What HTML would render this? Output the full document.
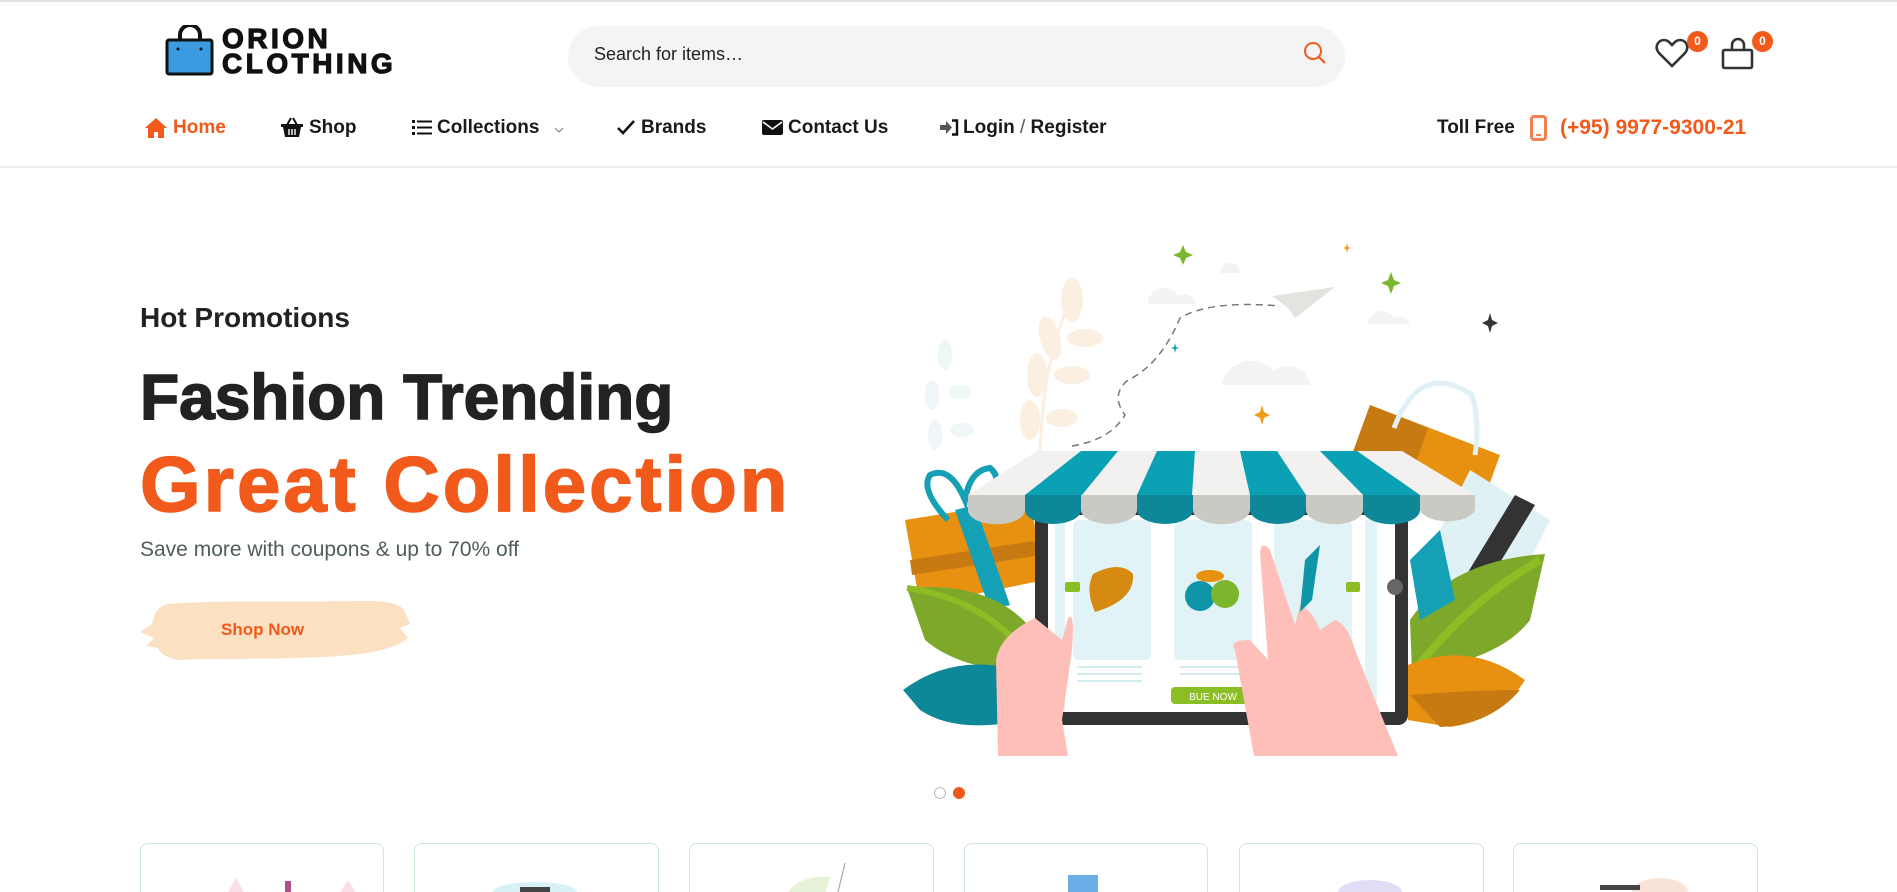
<!DOCTYPE html>
<html style="width:1897px;height:892px;overflow:hidden"><head><meta charset="utf-8"><style>
*{margin:0;padding:0;box-sizing:border-box}
body{width:1897px;height:892px;overflow:hidden;background:#fff;font-family:"Liberation Sans",Arial,sans-serif;position:relative;color:#222}
.a{position:absolute;white-space:nowrap}
.nav{font-size:19px;font-weight:bold;color:#1a1a1a;top:116px;line-height:24px}
.card{position:absolute;top:843px;height:49px;border:1px solid #cfe8d2;border-bottom:none;border-radius:8px 8px 0 0;background:#fff}
</style></head><body>
<div class="a" style="left:0;top:0;width:1897px;height:2px;background:#e3e3e3"></div>
<div class="a" style="left:0;top:166px;width:1897px;height:2px;background:#ececec"></div>

<svg class="a" style="left:164px;top:25px" width="52" height="52" viewBox="0 0 52 52">
<path d="M16 18 V10 a10 10 0 0 1 20 0 V18" fill="none" stroke="#111" stroke-width="4"/>
<rect x="3" y="15" width="45" height="34" rx="2" fill="#3a9be0" stroke="#111" stroke-width="3"/>
<circle cx="14" cy="24" r="1.5" fill="#111"/><circle cx="37" cy="24" r="1.5" fill="#111"/>
</svg>
<div class="a" style="left:222px;top:26px;font-size:28px;font-weight:900;letter-spacing:3.5px;line-height:25px;color:#111;-webkit-text-stroke:1.2px #111">ORION<br>CLOTHING</div>

<div class="a" style="left:568px;top:26px;width:777px;height:61px;border-radius:31px;background:#f4f4f4"></div>
<div class="a" style="left:594px;top:44px;font-size:18px;color:#222">Search for items…</div>
<svg class="a" style="left:1302px;top:40px" width="26" height="26" viewBox="0 0 26 26"><circle cx="11" cy="11" r="8" fill="none" stroke="#f15a1a" stroke-width="2"/><path d="M17 17 L23 23" stroke="#f15a1a" stroke-width="2.2"/></svg>

<svg class="a" style="left:1655px;top:37px" width="34" height="32" viewBox="0 0 34 32"><path d="M17 29 L4 16 C-1 10 3 3 9 3 C13 3 15 6 17 8 C19 6 21 3 25 3 C31 3 35 10 30 16 Z" fill="none" stroke="#333" stroke-width="2.6"/></svg>
<div class="a" style="left:1687px;top:31px;width:21px;height:21px;border-radius:50%;background:#f15a1a;color:#fff;font-size:12px;font-weight:bold;text-align:center;line-height:20px">0</div>
<svg class="a" style="left:1720px;top:36px" width="36" height="34" viewBox="0 0 36 34"><path d="M12 13 V9 a6 6 0 0 1 12 0 V13" fill="none" stroke="#333" stroke-width="2.6"/><rect x="3" y="14" width="29" height="18" rx="1.5" fill="none" stroke="#333" stroke-width="2.6"/></svg>
<div class="a" style="left:1752px;top:31px;width:21px;height:21px;border-radius:50%;background:#f15a1a;color:#fff;font-size:12px;font-weight:bold;text-align:center;line-height:20px">0</div>

<svg class="a" style="left:144px;top:117px" width="24" height="22" viewBox="0 0 24 22"><path d="M12 1 L1 11 H4 V21 H10 V15 H14 V21 H20 V11 H23 Z" fill="#f15a1a"/></svg>
<div class="a nav" style="left:173px;color:#f15a1a">Home</div>
<svg class="a" style="left:280px;top:116px" width="24" height="22" viewBox="0 0 24 22"><path d="M7 9 L11 2 M17 9 L13 2" stroke="#111" stroke-width="2"/><path d="M1 8 H23 V11 H21 L19 21 H5 L3 11 H1 Z" fill="#111"/><path d="M9 13 V19 M12 13 V19 M15 13 V19" stroke="#fff" stroke-width="1.4"/></svg>
<div class="a nav" style="left:309px">Shop</div>
<svg class="a" style="left:412px;top:119px" width="20" height="17" viewBox="0 0 20 17"><g fill="#111"><rect x="0" y="1" width="3" height="3"/><rect x="0" y="7" width="3" height="3"/><rect x="0" y="13" width="3" height="3"/><rect x="5" y="1.5" width="15" height="2"/><rect x="5" y="7.5" width="15" height="2"/><rect x="5" y="13.5" width="15" height="2"/></g></svg>
<div class="a nav" style="left:437px">Collections</div>
<svg class="a" style="left:553px;top:126px" width="12" height="8" viewBox="0 0 12 8"><path d="M2 2 L6 6 L10 2" fill="none" stroke="#888" stroke-width="1.2"/></svg>
<svg class="a" style="left:616px;top:119px" width="20" height="17" viewBox="0 0 20 17"><path d="M2 9 L7 14 L18 2" fill="none" stroke="#111" stroke-width="2.6"/></svg>
<div class="a nav" style="left:641px">Brands</div>
<svg class="a" style="left:762px;top:119px" width="21" height="17" viewBox="0 0 21 17"><rect x="0" y="1" width="21" height="15" rx="2" fill="#111"/><path d="M1 3 L10.5 10 L20 3" fill="none" stroke="#fff" stroke-width="1.6"/></svg>
<div class="a nav" style="left:788px">Contact Us</div>
<svg class="a" style="left:939px;top:119px" width="20" height="17" viewBox="0 0 20 17"><path d="M1 6 H7 V2 L13 8.5 L7 15 V11 H1 Z" fill="#555"/><path d="M13 1.5 H18 V15.5 H13" fill="none" stroke="#111" stroke-width="2.4"/></svg>
<div class="a nav" style="left:963px">Login <span style="font-weight:normal;color:#555">/</span> Register</div>

<div class="a nav" style="left:1437px">Toll Free</div>
<svg class="a" style="left:1530px;top:115px" width="17" height="26" viewBox="0 0 17 26"><rect x="1.5" y="1.5" width="14" height="23" rx="2.5" fill="none" stroke="#f47f50" stroke-width="3"/><rect x="6" y="19" width="5" height="2" fill="#f47f50"/></svg>
<div class="a nav" style="left:1560px;font-size:21px;color:#f15a1a">(+95) 9977-9300-21</div>

<div class="a" style="left:140px;top:298px;font-size:28px;font-weight:bold;color:#222;line-height:40px">Hot Promotions</div>
<div class="a" style="left:140px;top:362px;font-size:64px;font-weight:bold;color:#222;line-height:70px;-webkit-text-stroke:1.5px #222">Fashion Trending</div>
<div class="a" style="left:140px;top:441px;font-size:78px;font-weight:bold;color:#f15a1a;line-height:86px;letter-spacing:3px;-webkit-text-stroke:1.5px #f15a1a">Great Collection</div>
<div class="a" style="left:140px;top:537px;font-size:21px;color:#4f5d5a;line-height:26px">Save more with coupons &amp; up to 70% off</div>
<svg class="a" style="left:138px;top:598px" width="276" height="64" viewBox="0 0 276 64"><path d="M30 6 C80 2 150 4 230 3 C250 3 262 6 266 12 L272 26 L262 30 L270 40 C255 52 230 56 200 58 C150 62 80 60 40 62 C30 60 22 56 20 50 L8 48 L16 40 L2 34 L14 26 C16 16 20 8 30 6 Z" fill="#fbe1c2"/></svg>
<div class="a" style="left:221px;top:620px;font-size:17px;font-weight:bold;color:#f15a1a;line-height:20px">Shop Now</div>

<svg class="a" style="left:0;top:0" width="1897" height="892" viewBox="0 0 1897 892">
<g fill="#f4f2f2"><path d="M1148 304 a16 16 0 0 1 30 -8 a12 12 0 0 1 18 8 Z"/><path d="M1368 324 a14 14 0 0 1 26 -6 a11 11 0 0 1 16 6 Z"/><path d="M1222 385 a30 30 0 0 1 52 -14 a22 22 0 0 1 36 14 Z"/><path d="M1220 273 a10 10 0 0 1 20 0 Z"/></g>
<g fill="#fbefe2"><ellipse cx="1072" cy="300" rx="11" ry="22"/><ellipse cx="1050" cy="338" rx="10" ry="22" transform="rotate(-15 1050 338)"/><ellipse cx="1085" cy="338" rx="18" ry="9"/><ellipse cx="1037" cy="375" rx="10" ry="22"/><ellipse cx="1072" cy="375" rx="18" ry="9"/><ellipse cx="1030" cy="420" rx="10" ry="20"/><ellipse cx="1062" cy="418" rx="16" ry="9"/><path d="M1075 290 Q1040 360 1040 470" stroke="#fbefe2" stroke-width="3" fill="none"/></g>
<g fill="#eef6f8"><ellipse cx="945" cy="355" rx="7" ry="15"/><ellipse cx="932" cy="395" rx="7" ry="15"/><ellipse cx="960" cy="392" rx="12" ry="7"/><ellipse cx="935" cy="435" rx="7" ry="15"/><ellipse cx="962" cy="430" rx="12" ry="7"/></g>
<path d="M1072 446 Q1110 440 1125 415 Q1110 395 1128 380 Q1160 365 1180 318 Q1210 300 1280 306" fill="none" stroke="#777" stroke-width="1.5" stroke-dasharray="7 5"/>
<path d="M1272 296 L1335 287 L1295 318 L1288 308 Z" fill="#e3e3e0"/>
<g><path d="M1183 245 l3 7 l7 3 l-7 3 l-3 7 l-3 -7 l-7 -3 l7 -3 Z" fill="#7bb62d"/><path d="M1391 272 l3 8 l7 3 l-7 3 l-3 8 l-3 -8 l-7 -3 l7 -3 Z" fill="#7bb62d"/><path d="M1490 313 l2 7 l6 3 l-6 3 l-2 7 l-2 -7 l-6 -3 l6 -3 Z" fill="#333"/><path d="M1262 405 l2 7 l6 3 l-6 3 l-2 7 l-2 -7 l-6 -3 l6 -3 Z" fill="#f09a1a"/><path d="M1347 243 l1 4 l3 1 l-3 1 l-1 4 l-1 -4 l-3 -1 l3 -1 Z" fill="#f09a1a"/><path d="M1175 343 l1 4 l3 1 l-3 1 l-1 4 l-1 -4 l-3 -1 l3 -1 Z" fill="#16a0b5"/></g>
<path d="M1370 405 L1500 455 L1480 510 L1350 460 Z" fill="#e8900f"/><path d="M1370 405 L1428 428 L1410 480 L1350 460 Z" fill="#c77a12"/>
<path d="M1394 428 Q1420 360 1472 395 Q1480 420 1475 455" fill="none" stroke="#e0f1f5" stroke-width="5"/>
<path d="M1470 470 L1550 520 L1500 620 L1420 570 Z" fill="#e0f1f5"/><path d="M1515 495 L1535 505 L1465 620 L1445 610 Z" fill="#333"/>
<path d="M905 520 L1030 500 L1045 580 L920 605 Z" fill="#e8900f"/><path d="M910 560 L1040 540 L1042 555 L912 575 Z" fill="#c77a12"/>
<path d="M955 510 L990 610 L1010 605 L975 505 Z" fill="#16a0b5"/>
<path d="M948 520 Q920 490 930 475 Q950 465 965 500 Q970 470 990 468 Q1005 480 985 505" fill="none" stroke="#16a0b5" stroke-width="6"/>
<path d="M907 588 Q1000 580 1040 640 L1030 672 Q960 670 925 640 Z" fill="#7ea82a"/><path d="M907 588 Q990 600 1035 665" fill="none" stroke="#8cbd24" stroke-width="6"/>
<path d="M903 690 Q950 655 1010 668 L1000 724 Q950 730 920 710 Z" fill="#0e8899"/>
<path d="M1545 554 Q1450 560 1410 620 L1412 672 Q1500 660 1530 620 Z" fill="#7ea82a"/><path d="M1540 560 Q1470 600 1415 670" fill="none" stroke="#8cbd24" stroke-width="8"/>
<path d="M1410 560 L1440 530 L1455 600 L1420 620 Z" fill="#16a0b5"/>
<path d="M1408 665 Q1470 640 1525 680 Q1500 720 1450 727 L1408 720 Z" fill="#e8900f"/><path d="M1410 695 Q1470 690 1520 690 Q1490 725 1440 727 Z" fill="#c77a12"/>
<rect x="1035" y="495" width="373" height="230" rx="10" fill="#333"/>
<rect x="1048" y="515" width="347" height="197" fill="#fff"/>
<rect x="1073" y="520" width="78" height="140" rx="6" fill="#e1f3f6"/><rect x="1174" y="520" width="78" height="140" rx="6" fill="#e1f3f6"/><rect x="1274" y="520" width="78" height="140" rx="6" fill="#e1f3f6"/>
<rect x="1055" y="520" width="10" height="190" fill="#e1f3f6"/><rect x="1365" y="520" width="12" height="190" fill="#e1f3f6"/>
<path d="M1093 574 Q1120 560 1133 574 Q1135 600 1095 612 Q1085 590 1093 574 Z" fill="#d68a12"/>
<circle cx="1200" cy="596" r="15" fill="#0e95a8"/><circle cx="1225" cy="594" r="14" fill="#7bb62d"/><ellipse cx="1210" cy="576" rx="14" ry="6" fill="#e8900f"/>
<rect x="1065" y="582" width="15" height="10" rx="2" fill="#8cbd24"/><rect x="1346" y="582" width="14" height="10" rx="2" fill="#8cbd24"/>
<circle cx="1395" cy="587" r="8" fill="#666"/>
<g stroke="#d3ebf0" stroke-width="2"><path d="M1077 667 H1142 M1077 674 H1142 M1077 681 H1142 M1180 667 H1245 M1180 674 H1245"/></g>
<rect x="1171" y="687" width="85" height="17" rx="4" fill="#8cbd24"/><text x="1213" y="700" text-anchor="middle" font-size="10" fill="#fff" font-family="Liberation Sans">BUE NOW</text>
<path d="M1037 451 L1402 451 L1475 495 L968 495 Z" fill="#f3f1f0"/>
<g fill="#0aa1b5"><path d="M1081 451 H1118 L1082 495 H1025 Z"/><path d="M1157 451 H1195 L1192 495 H1137 Z"/><path d="M1240 451 H1277 L1306 495 H1250 Z"/><path d="M1320 451 H1357 L1420 495 H1363 Z"/></g>
<g><path d="M968 495 H1025 V510 a28 14 0 0 1 -57 0 Z" fill="#cacac5"/><path d="M1025 495 H1081 V510 a28 14 0 0 1 -56 0 Z" fill="#0e8899"/><path d="M1081 495 H1137 V510 a28 14 0 0 1 -56 0 Z" fill="#cacac5"/><path d="M1137 495 H1193 V510 a28 14 0 0 1 -56 0 Z" fill="#0e8899"/><path d="M1193 495 H1250 V510 a28 14 0 0 1 -57 0 Z" fill="#cacac5"/><path d="M1250 495 H1306 V510 a28 14 0 0 1 -56 0 Z" fill="#0e8899"/><path d="M1306 495 H1363 V510 a28 14 0 0 1 -57 0 Z" fill="#cacac5"/><path d="M1363 495 H1420 V510 a28 14 0 0 1 -57 0 Z" fill="#0e8899"/><path d="M1420 495 H1475 V510 a28 14 0 0 1 -55 0 Z" fill="#cacac5"/></g>
<path d="M998 756 L996 660 Q1000 635 1035 618 L1062 640 L1068 618 Q1075 610 1072 650 L1062 720 L1068 756 Z" fill="#fdbfb7"/>
<path d="M1254 756 L1235 650 Q1228 640 1250 640 L1268 660 L1260 552 Q1262 540 1270 550 L1295 625 L1300 605 Q1312 610 1320 630 L1335 620 Q1348 625 1355 650 Q1375 700 1398 756 Z" fill="#fdbfb7"/>
<path d="M1305 560 L1320 545 L1312 600 L1300 612 Z" fill="#0e95a8"/>
</svg>

<div class="a" style="left:934px;top:787px;width:12px;height:12px;border-radius:50%;border:1px solid #bbb"></div>
<div class="a" style="left:953px;top:787px;width:12px;height:12px;border-radius:50%;background:#f15a1a"></div>

<div class="card" style="left:140px;width:244px"></div>
<div class="card" style="left:414px;width:245px"></div>
<div class="card" style="left:689px;width:245px"></div>
<div class="card" style="left:964px;width:244px"></div>
<div class="card" style="left:1239px;width:245px"></div>
<div class="card" style="left:1513px;width:245px"></div>
<svg class="a" style="left:0;top:843px" width="1897" height="49" viewBox="0 0 1897 49">
<path d="M228 49 l8 -14 l8 14 Z" fill="#f9dfe8"/><rect x="285" y="38" width="6" height="11" fill="#b0508a"/><path d="M340 49 l8 -12 l8 12 Z" fill="#f9dfe8"/>
<ellipse cx="535" cy="49" rx="42" ry="10" fill="#d8f1f6"/><rect x="520" y="44" width="30" height="5" fill="#444"/>
<path d="M788 49 Q800 32 830 34 L826 49 Z" fill="#e6f3d8"/><path d="M845 20 L838 49" stroke="#999"/>
<rect x="1068" y="32" width="30" height="17" fill="#6aaee8"/>
<ellipse cx="1370" cy="49" rx="32" ry="12" fill="#e2dcf7"/>
<ellipse cx="1660" cy="49" rx="28" ry="14" fill="#fae4d8"/><rect x="1600" y="42" width="40" height="5" fill="#444"/>
</svg>
</body></html>
